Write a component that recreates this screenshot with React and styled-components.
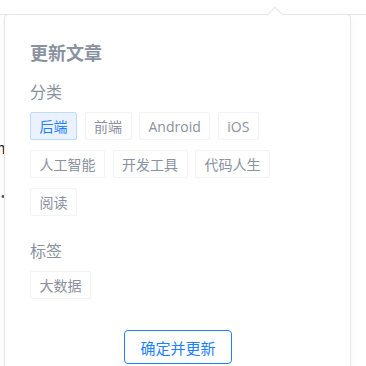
import React from "react";
import styled, { createGlobalStyle } from "styled-components";

const GlobalStyle = createGlobalStyle`
  html, body {
    margin: 0;
    padding: 0;
    background: #fff;
  }
  body {
    font-family: "Noto Sans CJK SC", "Noto Sans", sans-serif;
    overflow: hidden;
  }
`;

const categories = ["后端", "前端", "Android", "iOS", "人工智能", "开发工具", "代码人生", "阅读"];

const App = () => {
    return (
        <>
            <GlobalStyle />
            <Page>
                <TopBar />
                <Behind>
                    <span>n</span>
                    <span>:</span>
                    <span>·</span>
                    <span>:</span>
                </Behind>
                <Popover>
                    <Arrow />
                    <Title>更新文章</Title>
                    <Label>分类</Label>
                    <TagList>
                        {categories.map((c, i) => (
                            <Tag key={c} active={i === 0}>
                                {c}
                            </Tag>
                        ))}
                    </TagList>
                    <Label spaced>标签</Label>
                    <TagList>
                        <Tag>大数据</Tag>
                    </TagList>
                    <Footer>
                        <SubmitBtn>确定并更新</SubmitBtn>
                    </Footer>
                </Popover>
            </Page>
        </>
    );
};

const Page = styled.div`
    position: relative;
    width: 366px;
    height: 366px;
    overflow: hidden;
`;

const TopBar = styled.div`
    height: 14px;
    border-bottom: 1px solid #e4e6eb;
`;

const Behind = styled.div`
    display: flex;
    flex-direction: column;
    gap: 8px;
    margin: 124px 0 0 -4px;
    font-size: 14px;
    color: #515767;
    line-height: 16px;
    span:first-child {
        color: #252933;
        font-size: 16px;
    }
`;

const Popover = styled.div`
    position: absolute;
    top: 14px;
    left: 4px;
    width: 320px;
    height: 360px;
    padding: 23px 0 0 25px;
    background: #fff;
    border: 1px solid #e4e6eb;
    border-radius: 4px 4px 0 0;
    box-shadow: 0 4px 12px rgba(0, 0, 0, 0.04);
`;

const Arrow = styled.div`
    position: absolute;
    top: -6px;
    left: 264px;
    width: 11px;
    height: 11px;
    background: #fff;
    border-left: 1px solid #e4e6eb;
    border-top: 1px solid #e4e6eb;
    transform: rotate(45deg);
`;

const Title = styled.div`
    font-size: 18px;
    font-weight: 700;
    line-height: 28px;
    color: #8a919f;
`;

const Label = styled.div`
    margin-top: ${(p) => (p.spaced ? "22px" : "13px")};
    font-size: 16px;
    line-height: 24px;
    color: #8a919f;
`;

const TagList = styled.div`
    display: flex;
    flex-wrap: wrap;
    gap: 10px 7.5px;
    width: 270px;
    margin-top: 9px;
`;

const Tag = styled.div`
    box-sizing: border-box;
    height: 28px;
    padding: 0 8.5px;
    display: flex;
    align-items: center;
    font-size: 14px;
    color: ${(p) => (p.active ? "#1e80ff" : "#8a919f")};
    background: ${(p) => (p.active ? "#eaf2ff" : "#fff")};
    border: 1px solid ${(p) => (p.active ? "#bedaff" : "#f2f3f5")};
    border-radius: 2px;
    font-family: "Open Sans", "Noto Sans CJK SC", sans-serif;
`;

const Footer = styled.div`
    display: flex;
    justify-content: center;
    width: 296px;
    margin-top: 31px;
`;

const SubmitBtn = styled.button`
    box-sizing: border-box;
    height: 34px;
    padding: 0 15px;
    font-family: "Noto Sans CJK SC", sans-serif;
    font-size: 15px;
    color: #1e80ff;
    background: #fff;
    border: 1px solid #1e80ff;
    border-radius: 4px;
`;

export default App;
